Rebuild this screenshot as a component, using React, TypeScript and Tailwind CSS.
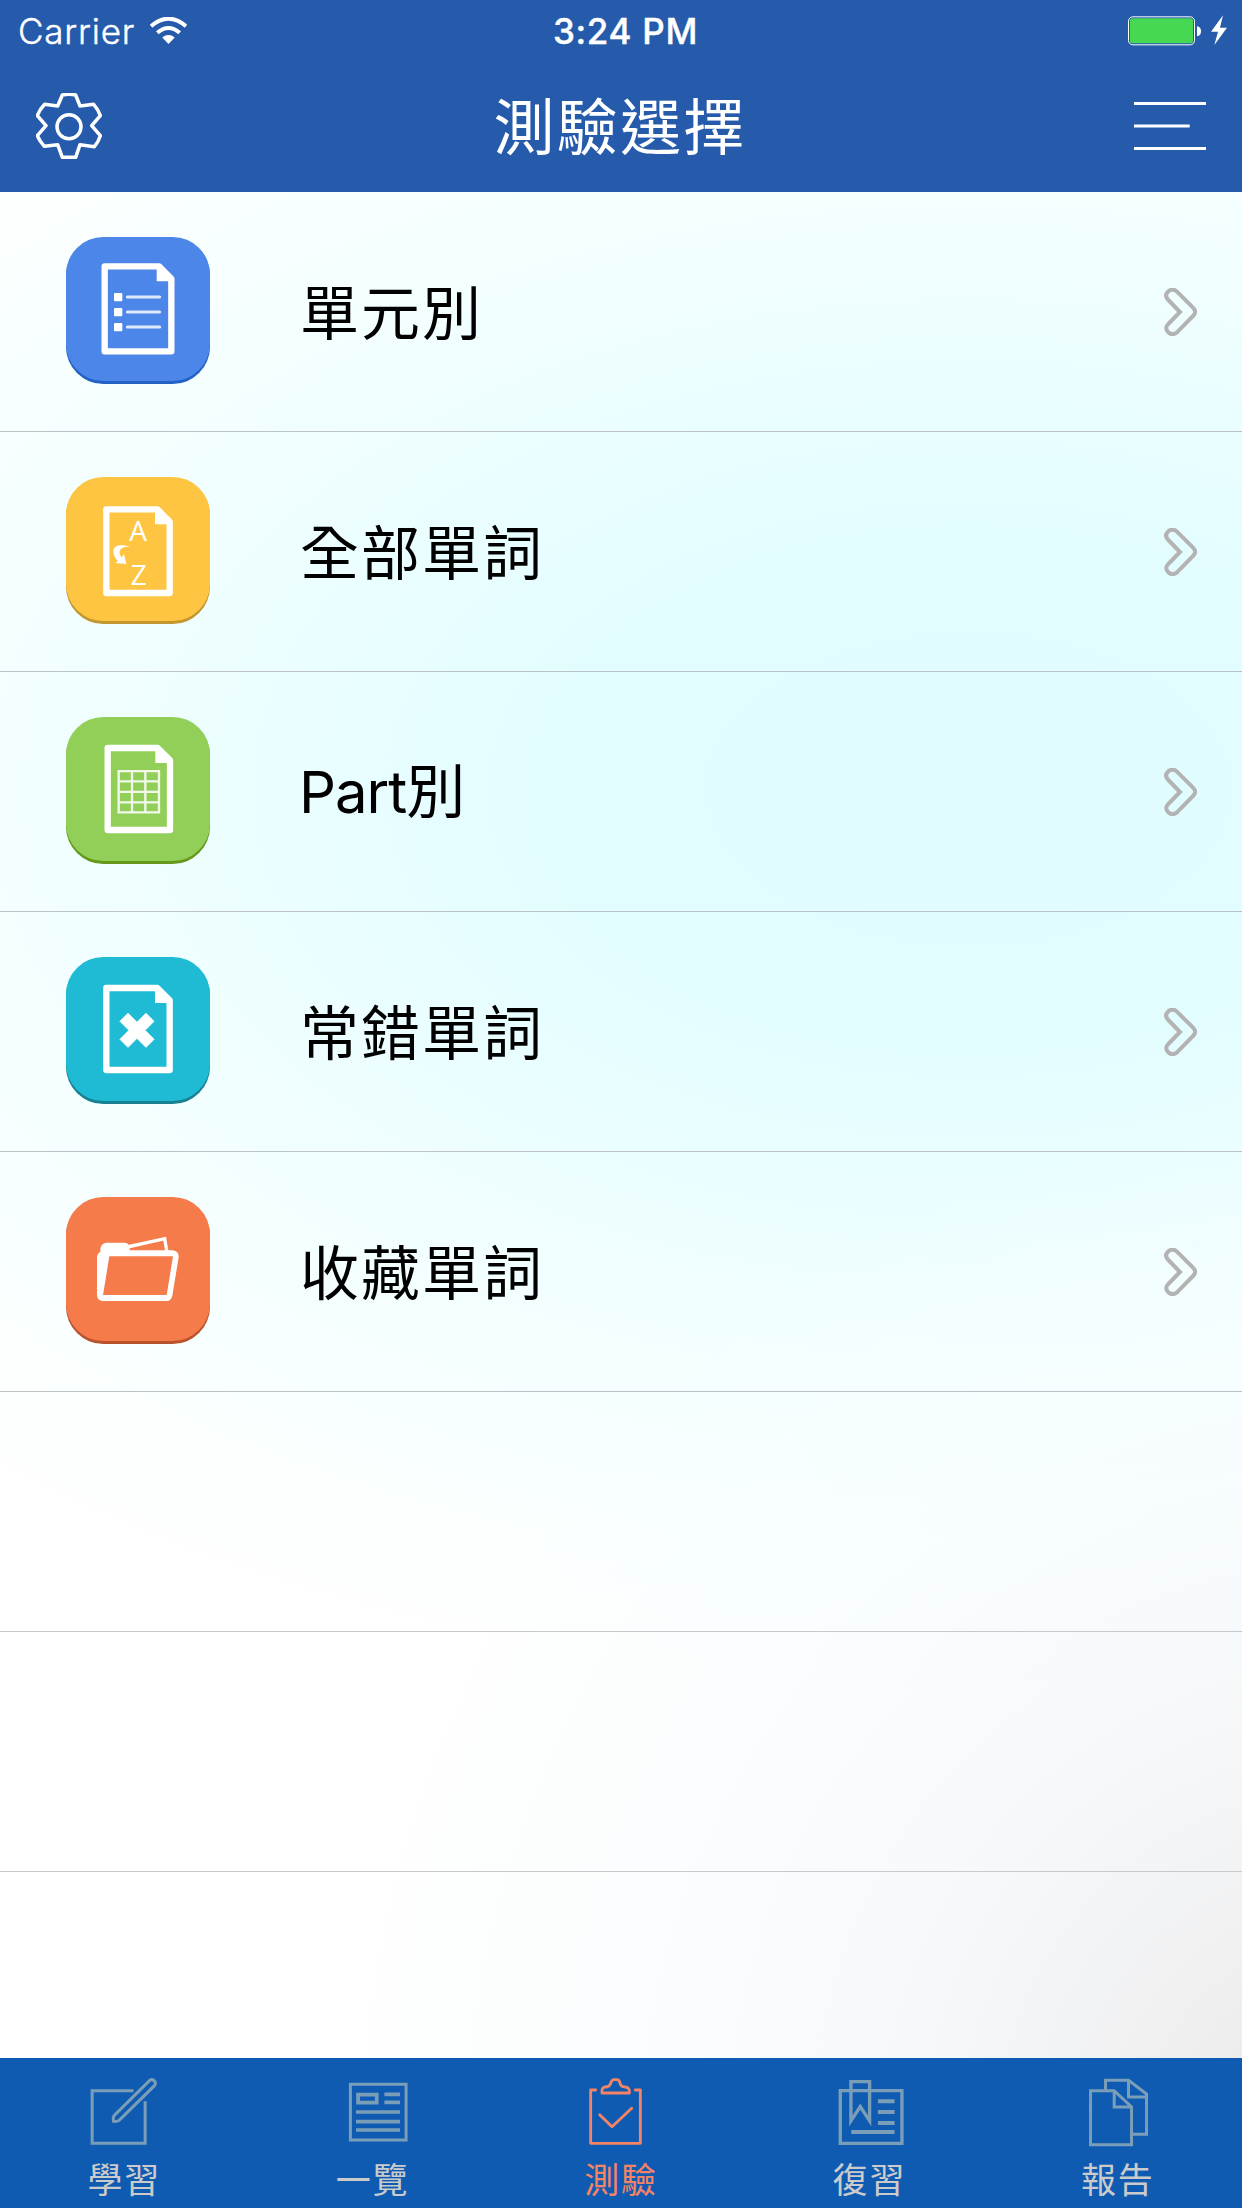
import type { ReactNode } from "react";

const CJK = "font-['Noto_Sans_CJK_TC',sans-serif]";

function Tile({ base, edge, children }: { base: string; edge: string; children: ReactNode }) {
  return (
    <svg className="h-[147px] w-36 shrink-0" viewBox="78 81 432 441" fill="none">
      <rect x="78" y="85" width="432" height="437" rx="112" fill={edge} />
      <rect x="78" y="81" width="432" height="432" rx="112" fill={base} />
      {children}
    </svg>
  );
}

function Sheet({ x, y, w, h }: { x: number; y: number; w: number; h: number }) {
  const r = x + w;
  const b = y + h;
  return (
    <>
      <path
        d={`M${x + 9} ${y + 9}H${r - 46}L${r - 9} ${y + 46}V${b - 9}H${x + 9}Z`}
        stroke="#fff"
        strokeWidth="19"
        strokeLinejoin="round"
      />
      <path d={`M${r - 53} ${y + 2}H${r - 44}L${r - 2} ${y + 44}V${y + 54}H${r - 53}Z`} fill="#fff" />
    </>
  );
}

const ROWS: { label: string; icon: ReactNode }[] = [
  {
    label: "單元別",
    icon: (
      <Tile base="#4c86e8" edge="#2361c4">
        <Sheet x={185} y={160} w={218} h={273} />
        {[261, 306, 351].map((y) => (
          <g key={y}>
            <rect x="222" y={y - 12} width="25" height="25" rx="3" fill="#fff" />
            <path d={`M262 ${y}H359`} stroke="#dfe9fb" strokeWidth="9" strokeLinecap="round" />
          </g>
        ))}
      </Tile>
    ),
  },
  {
    label: "全部單詞",
    icon: (
      <Tile base="#fec543" edge="#c4962f">
        <Sheet x={190} y={169} w={208} h={269} />
        <text x="294" y="272" textAnchor="middle" fontSize="84" fill="#fff" className="font-['Open_Sans',sans-serif]">A</text>
        <text x="296" y="406" textAnchor="middle" fontSize="84" fill="#fff" className="font-['Open_Sans',sans-serif]">Z</text>
        <path d="M270 290C246 282 219 284 220 305C221 318 228 326 234 333L226 339L259 342L252 313L245 322C236 311 232 288 270 290Z" fill="#fff" />
      </Tile>
    ),
  },
  {
    label: "Part別",
    icon: (
      <Tile base="#92cf58" edge="#66991b">
        <Sheet x={194} y={165} w={205} h={264} />
        <path
          d="M236 243.500H357V367H236ZM276 243V367M316 243V367M236 274H357M236 305.500H357M236 337H357"
          stroke="#f2f9eb"
          strokeWidth="7"
        />
      </Tile>
    ),
  },
  {
    label: "常錯單詞",
    icon: (
      <Tile base="#1fbad3" edge="#178092">
        <Sheet x={190} y={165} w={208} h={264} />
        <path d="M264 250L291 277L318 250L342 274L315 301L342 328L318 352L291 325L264 352L240 328L267 301L240 274Z" fill="#fff" stroke="#fff" strokeWidth="3" strokeLinejoin="round" />
      </Tile>
    ),
  },
  {
    label: "收藏單詞",
    icon: (
      <Tile base="#f57b4a" edge="#b9532c">
        <path d="M262 231L374 206L381 247" stroke="#fff" strokeWidth="10" />
        <path d="M181 246V238Q183 219 201 218H254Q268 220 269 231V241H398Q417 243 416 262L397 377Q394 392 380 393H188Q173 391 171 377V262Q172 250 181 246ZM208 259L189 375H380L399 259Z" fill="#fff" fillRule="evenodd" />
      </Tile>
    ),
  },
];

function Chevron() {
  return (
    <svg className="mt-[2px] h-12 w-[33px] shrink-0" viewBox="126 84 99 144" fill="none">
      <path
        d="M138 95Q151 83 165 95L213 143Q226 155 213 168L165 217Q151 228 139 217Q126 204 139 192L174 156L139 120Q126 107 138 95Z"
        stroke="#b3b3b3"
        strokeWidth="12"
      />
    </svg>
  );
}

const GRAY = "#7b9eb8";

const TABS: { label: string; box: string; icon: ReactNode }[] = [
  {
    label: "學習",
    box: "237.6 90 270 240",
    icon: (
      <g stroke={GRAY} strokeWidth="9">
        <path d="M401 152H277V310H436V184" />
        <path d="M449 122Q456 116 463 122Q470 129 464 137L358 241Q353 245 341 244Q339 234 342 228Z" />
      </g>
    ),
  },
  {
    label: "一覽",
    box: "982.8 90 270 240",
    icon: (
      <g stroke={GRAY} strokeWidth="9">
        <path d="M1050 133H1217V300H1050Z" />
        <path d="M1073 164H1129V188H1073Z" strokeWidth="11" />
        <path d="M1152 163H1199M1152 187H1199M1067 216H1199M1067 245H1199M1067 270H1199" strokeWidth="11" />
      </g>
    ),
  },
  {
    label: "測驗",
    box: "468 90 270 240",
    icon: (
      <g stroke="#f58466" strokeWidth="8.500" strokeLinecap="round" strokeLinejoin="round">
        <path d="M527 150H512V310H661V150H646" />
        <path d="M546 159Q544 142 555 141Q570 141 573 127Q576 119 582 119H591Q598 119 601 132Q603 141 615 141Q630 141 628 159Z" />
        <path d="M539 224L576 260L635 205" />
      </g>
    ),
  },
  {
    label: "復習",
    box: "7.2 90 270 240",
    icon: (
      <g stroke={GRAY} strokeWidth="10">
        <path d="M56 152H241V310H56Z" />
        <path d="M88 243V125H144V243L116 200Z" />
        <path d="M169 184H219M169 216H219M169 249H219M89 276H219" strokeWidth="12" />
      </g>
    ),
  },
  {
    label: "報告",
    box: "752.4 90 270 240",
    icon: (
      <g stroke={GRAY} strokeWidth="9">
        <path d="M805 152H876L928 201V314H805ZM876 152V201H928" />
        <path d="M850 152V121H919L973 162V283H930M919 121V171H973" />
      </g>
    ),
  },
];

export default function App() {
  return (
    <div className="flex h-[2208px] w-[1242px] flex-col overflow-hidden bg-white">
      <header className="h-48 shrink-0 bg-[#265bac] text-white">
        <div className="grid h-[62px] grid-cols-3 items-center pl-[18px] pr-[15px] font-['Inter',sans-serif]">
          <div className="flex items-center gap-[15px]">
            <span className="text-[35px] font-light leading-none tracking-[0.8px] [-webkit-text-stroke:0.4px_white]">Carrier</span>
            <svg className="mb-[2px] h-[27px] w-[37px]" viewBox="450 47 112 82" fill="none">
              <path d="M453 75Q506 29 559 75" stroke="#fff" strokeWidth="12" />
              <path d="M472 95Q506 66 540 95" stroke="#fff" strokeWidth="12" />
              <path d="M487 109Q506 94 525 109L506 129Z" fill="#fff" />
            </svg>
          </div>
          <span className="pl-[6px] text-center text-[35px] font-medium leading-none tracking-[0.700px] [-webkit-text-stroke:0.4px_white]">3:24 PM</span>
          <svg className="mb-[2px] h-[31px] w-[99px] justify-self-end" viewBox="258 44 297 93" fill="none">
            <rect x="259.500" y="49.500" width="198" height="84" rx="13" stroke="#fff" strokeWidth="3" />
            <rect x="264" y="54" width="189" height="75" rx="8" fill="#46d753" />
            <path d="M465 78Q477 80 477 93Q477 106 465 108Z" fill="#fff" />
            <path d="M543 45L507 94H528L517 134L555 82H534Z" fill="#fff" />
          </svg>
        </div>
        <div className="flex h-32 items-center justify-between px-9">
          <svg className="h-[66px] w-[66px]" viewBox="108 279 198 198" fill="none" stroke="#fff" strokeWidth="10.500" strokeLinejoin="round">
            <path d="M187 285Q207 281 227 285L240 318L281 313Q295 329 301 347L275 377L301 407Q296 424 283 440L240 434L227 472H187L173 434L133 439Q118 422 112 407L138 377L112 347Q119 328 134 313L173 318Z" />
            <circle cx="207" cy="380" r="36" />
          </svg>
          <h1 className={`${CJK} ml-1 pb-[5px] text-[61px] font-normal leading-none tracking-[2.200px]`}>測驗選擇</h1>
          <svg className="h-12 w-[72px]" viewBox="276 306 216 144" fill="none" stroke="#fff">
            <path d="M276 310.500H492M276 445.500H492" strokeWidth="9" />
            <path d="M276 378H443" strokeWidth="9" />
          </svg>
        </div>
      </header>

      <main className="min-h-0 flex-1 overflow-hidden bg-[radial-gradient(ellipse_1000px_1050px_at_108%_105%,#e9e7e7_0%,rgba(238,238,239,0.9)_20%,rgba(244,247,250,0.7)_48%,rgba(248,253,255,0.5)_75%,transparent_100%),radial-gradient(ellipse_1500px_900px_at_78%_32%,#e0fcff_0%,#e3fdff_30%,#effeff_55%,#f8ffff_78%,#fefffe_100%)]">
        {ROWS.map((row) => (
          <div key={row.label} className="flex h-60 items-center border-b border-[#bcc2c5] pb-[2px] pl-[66px] pr-[45px]">
            {row.icon}
            <span className={`${CJK} ml-[90px] flex-1 pb-[3px] text-[59px] leading-none tracking-[2px] text-black`}>
              {row.label.startsWith("Part") ? (
                <>
                  <span className="-ml-px font-['Inter',sans-serif] text-[58px] tracking-[-1px]">Part</span>別
                </>
              ) : (
                row.label
              )}
            </span>
            <Chevron />
          </div>
        ))}
        <div className="h-60 border-b border-[#c8c9cc]" />
        <div className="h-60 border-b border-[#c8c9cc]" />
      </main>

      <nav className="grid h-[150px] shrink-0 grid-cols-5 bg-[#0f5bb2]">
        {TABS.map((tab) => (
          <div key={tab.label} className="flex flex-col items-center pt-3">
            <svg className="h-20 w-[90px] shrink-0" viewBox={tab.box} fill="none">
              {tab.icon}
            </svg>
            <span
              className={`${CJK} mt-[10px] text-[35px] font-normal leading-none tracking-[1.800px] ${
                tab.label === "測驗" ? "text-[#f58466]" : "text-[#cbcbcb]"
              }`}
            >
              {tab.label}
            </span>
          </div>
        ))}
      </nav>
    </div>
  );
}
